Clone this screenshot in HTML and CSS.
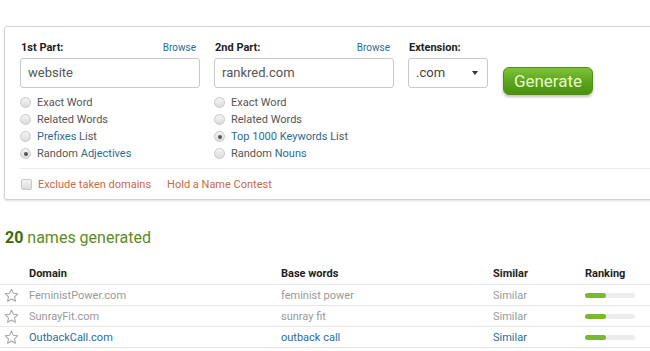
FILE: index.html
```html
<!DOCTYPE html>
<html lang="en">
<head>
    <meta charset="UTF-8">
    <meta name="viewport" content="width=device-width, initial-scale=1.0">
    <title>Domain Name Generator</title>
    <link rel="stylesheet" href="styles.css">
</head>
<body>
    <div class="panel">
        <div class="fields">
            <div class="part">
                <div class="part-head">
                    <span class="part-label">1st Part:</span>
                    <a class="browse">Browse</a>
                </div>
                <div class="text-box">website</div>
                <ul class="options">
                    <li><span class="radio"></span>Exact Word</li>
                    <li><span class="radio"></span>Related Words</li>
                    <li><span class="radio"></span><a>Prefixes</a>&nbsp;List</li>
                    <li><span class="radio checked"></span>Random&nbsp;<a>Adjectives</a></li>
                </ul>
            </div>
            <div class="part">
                <div class="part-head">
                    <span class="part-label">2nd Part:</span>
                    <a class="browse">Browse</a>
                </div>
                <div class="text-box">rankred.com</div>
                <ul class="options">
                    <li><span class="radio"></span>Exact Word</li>
                    <li><span class="radio"></span>Related Words</li>
                    <li><span class="radio checked"></span><a>Top 1000 Keywords</a>&nbsp;List</li>
                    <li><span class="radio"></span>Random&nbsp;<a>Nouns</a></li>
                </ul>
            </div>
            <div class="ext">
                <div class="part-head">
                    <span class="part-label">Extension:</span>
                </div>
                <div class="select-box">.com <span class="caret"></span></div>
            </div>
            <button class="generate">Generate</button>
        </div>
        <div class="panel-foot">
            <span class="check"></span>
            <a class="orange">Exclude taken domains</a>
            <a class="orange contest">Hold a Name Contest</a>
        </div>
    </div>

    <h2 class="count"><b>20</b> names generated</h2>

    <div class="results">
        <div class="row head">
            <span></span>
            <span>Domain</span>
            <span>Base words</span>
            <span>Similar</span>
            <span>Ranking</span>
        </div>
        <div class="row">
            <svg class="star" viewBox="0 0 16 16"><path d="M8 1.2l2 4.4 4.8.5-3.6 3.3 1 4.7L8 11.7l-4.2 2.4 1-4.7L1.2 6.1l4.8-.5z"/></svg>
            <span>FeministPower.com</span>
            <span>feminist power</span>
            <span>Similar</span>
            <span class="bar"><span class="fill"></span></span>
        </div>
        <div class="row">
            <svg class="star" viewBox="0 0 16 16"><path d="M8 1.2l2 4.4 4.8.5-3.6 3.3 1 4.7L8 11.7l-4.2 2.4 1-4.7L1.2 6.1l4.8-.5z"/></svg>
            <span>SunrayFit.com</span>
            <span>sunray fit</span>
            <span>Similar</span>
            <span class="bar"><span class="fill"></span></span>
        </div>
        <div class="row link">
            <svg class="star" viewBox="0 0 16 16"><path d="M8 1.2l2 4.4 4.8.5-3.6 3.3 1 4.7L8 11.7l-4.2 2.4 1-4.7L1.2 6.1l4.8-.5z"/></svg>
            <span>OutbackCall.com</span>
            <span>outback call</span>
            <span>Similar</span>
            <span class="bar"><span class="fill"></span></span>
        </div>
    </div>
</body>
</html>
```

FILE: styles.css
```css
body {
    font-family: Roboto, "Liberation Sans", sans-serif;
    margin: 0;
    padding-top: 26px;
    overflow: hidden;
    background: #fff;
    color: #444;
    font-size: 11px;
}
a {
    color: #2b6c96;
}
.panel {
    margin-left: 4px;
    width: 680px;
    border: 1px solid #d2d2d2;
    border-radius: 3px;
    box-shadow: 0 1px 2px rgba(0, 0, 0, 0.12);
    padding: 14px 0 0 15px;
    box-sizing: border-box;
    height: 174px;
}
.fields {
    display: flex;
    align-items: flex-start;
}
.part {
    width: 180px;
    margin-right: 14px;
}
.part-head {
    display: flex;
    justify-content: space-between;
    align-items: baseline;
    height: 17px;
    padding-left: 1px;
    padding-right: 4px;
}
.part-label {
    font-weight: bold;
    color: #222;
    font-size: 11px;
}
.browse {
    font-size: 10px;
}
.text-box {
    height: 30px;
    border: 1px solid #c9c9c9;
    border-radius: 3px;
    box-sizing: border-box;
    padding: 0 7px;
    line-height: 28px;
    font-size: 13px;
    color: #555;
}
.options {
    list-style: none;
    margin: 6px 0 0;
    padding: 0;
}
.options li {
    display: flex;
    align-items: center;
    height: 17px;
    font-size: 11px;
    color: #555;
}
.radio {
    width: 9px;
    height: 9px;
    border-radius: 50%;
    border: 1px solid #c8c8c8;
    background: linear-gradient(#f4f4f4, #dcdcdc);
    margin-right: 6px;
    position: relative;
}
.radio.checked::after {
    content: "";
    position: absolute;
    left: 2.5px;
    top: 2.5px;
    width: 4px;
    height: 4px;
    border-radius: 50%;
    background: #555;
}
.ext {
    width: 80px;
}
.select-box {
    height: 30px;
    border: 1px solid #c9c9c9;
    border-radius: 3px;
    box-sizing: border-box;
    padding: 0 0 0 7px;
    line-height: 28px;
    font-size: 13px;
    color: #444;
    position: relative;
}
.caret {
    position: absolute;
    right: 9px;
    top: 12px;
    border-left: 3.5px solid transparent;
    border-right: 3.5px solid transparent;
    border-top: 4px solid #333;
}
.generate {
    margin: 26px 0 0 15px;
    width: 90px;
    height: 28px;
    border: 1px solid #4f8f17;
    border-radius: 6px;
    background: linear-gradient(#7fc236, #5aa41c 55%, #4b9011);
    color: #e8f7cf;
    font-family: Roboto, "Liberation Sans", sans-serif;
    font-size: 17px;
    padding: 0;
    box-shadow: 0 2px 3px rgba(0, 0, 0, 0.25);
}
.panel-foot {
    margin-top: 6px;
    border-top: 1px solid #ececec;
    display: flex;
    align-items: center;
    height: 31px;
    padding-left: 1px;
}
.check {
    width: 9px;
    height: 9px;
    border: 1px solid #c8c8c8;
    border-radius: 2px;
    background: linear-gradient(#f4f4f4, #dcdcdc);
    margin-right: 6px;
}
.orange {
    color: #c86a44;
}
.contest {
    margin-left: 16px;
}
.count {
    margin: 28px 0 0 5px;
    font-size: 16px;
    font-weight: normal;
    color: #5b8c1f;
    line-height: 20px;
}
.count b {
    color: #3c6a0c;
}
.results {
    margin: 15px 0 0 0;
}
.row {
    display: grid;
    grid-template-columns: 29px 252px 212px 92px 1fr;
    align-items: center;
    height: 20px;
    border-bottom: 1px solid #e6e6e6;
    color: #999;
    font-size: 11px;
}
.row.head {
    color: #222;
    font-weight: bold;
    height: 21px;
}
.row.link {
    color: #2b6c96;
}
.star {
    width: 15px;
    height: 15px;
    margin-left: 4px;
    fill: none;
    stroke: #a6a6a6;
    stroke-width: 1.1;
    stroke-linejoin: round;
}
.bar {
    width: 50px;
    height: 5px;
    border-radius: 3px;
    background: #ececec;
    display: block;
}
.fill {
    display: block;
    width: 21px;
    height: 5px;
    border-radius: 3px;
    background: #7ab830;
}
```
